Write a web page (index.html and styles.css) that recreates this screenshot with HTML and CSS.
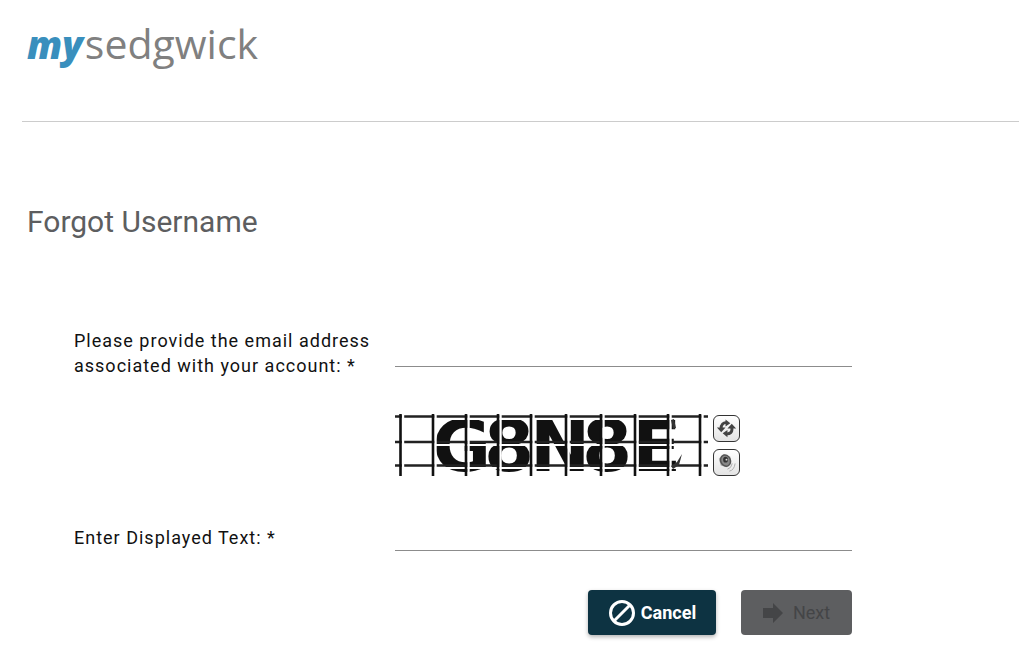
FILE: index.html
```html
<!DOCTYPE html>
<html lang="en">

<head>
    <meta charset="UTF-8">
    <meta name="viewport" content="width=device-width, initial-scale=1.0">
    <title>Forgot Username</title>
    <link rel="stylesheet" href="styles.css">
</head>

<body>
    <header class="header">
        <a class="logo" href="#"><span class="logo-my">my</span><span class="logo-name">sedgwick</span></a>
    </header>

    <main class="content">
        <h1>Forgot Username</h1>

        <form id="form" class="form" action="#">
            <div class="form-row">
                <label for="email">Please provide the email address associated with your account: *</label>
                <input id="email" class="in" type="email">
            </div>

            <div class="captcha">
                <svg class="captcha-image" viewBox="0 0 313 62" role="img" aria-label="Captcha">
                    <text class="captcha-text" y="57" x="37 89 135 187 237">G8N8E</text>
                    <!-- light gaps beside the grid lines -->
                    <path stroke="#fff" stroke-width="2" d="M0 5H313M0 31H313M0 54H313" />
                    <path stroke="#222" stroke-width="2.6" d="M0 2.5H313M0 28H313M0 51.5H313" />
                    <path stroke="#fff" stroke-width="2.4" d="M8 0V62M40.500 0V62M73.500 0V62M105.500 0V62M138.500 0V62M173.500 0V62M208.500 0V62M242.500 0V62M275.500 0V62M307.500 0V62" />
                    <path stroke="#111" stroke-width="2.6" d="M5.500 0V62M38 0V62M71 0V62M103 0V62M136 0V62M171 0V62M206 0V62M240 0V62M273 0V62M305 0V62" />
                    <path fill="#333" d="M276 6l3-1 2 9-3 1zM276 52l6-4 5-8-3 11-6 4z" />
                </svg>
                <div class="captcha-tools">
                    <button type="button" class="tool" aria-label="New image">
                        <svg viewBox="0 0 24 24" fill="none">
                            <path stroke="#444" stroke-width="3" d="M6.500 12C6 8 9 5.500 12 6M17.500 11c1 5-2 7-6 6.500" />
                            <path fill="#444" d="M2 11h9l-4.500 5zM13 12h9l-4.500-5zM11 2.500l5 4-5 3.500zM13 13.500v7.500l-5-4z" />
                        </svg>
                    </button>
                    <button type="button" class="tool" aria-label="Play sound">
                        <svg viewBox="0 0 24 24" fill="none">
                            <path fill="#aaa" d="M4 8l5-5 7 3 1 7-5 4-6-2z" />
                            <ellipse cx="11" cy="10" rx="5" ry="6" fill="#888" stroke="#555" stroke-width="1.5" transform="rotate(-25 11 10)" />
                            <ellipse cx="11" cy="9" rx="2.500" ry="3" fill="#333" />
                            <circle cx="12" cy="9" r="1" fill="#ddd" />
                            <path stroke="#aaa" d="M13 19q4-1 5-6M15 21q5-1 6-8" />
                        </svg>
                    </button>
                </div>
            </div>

            <div class="form-row">
                <label for="captcha-text">Enter Displayed Text: *</label>
                <input id="captcha-text" class="in" type="text">
            </div>

            <div class="buttons">
                <button type="button" class="btn btn-cancel">
                    <svg width="28" height="28" viewBox="0 0 28 28" fill="none" stroke="#fff" stroke-width="3">
                        <circle cx="14" cy="14" r="11.500" />
                        <path d="M6 22L22 6" />
                    </svg>
                    Cancel
                </button>
                <button type="submit" class="btn btn-next" disabled>
                    <svg width="20" height="20" viewBox="0 0 20 20" fill="#444547">
                        <path d="M0 5h10V0l10 10-10 10v-5H0z" />
                    </svg>
                    Next
                </button>
            </div>
        </form>
    </main>
</body>

</html>
```
FILE: styles.css
```css
* {
    box-sizing: border-box;
}

body {
    margin: 0;
    background-color: #fff;
    color: #111;
    font-family: Roboto, sans-serif;
}

.header {
    margin-left: 22px;
    padding: 13px 5px 47px;
    border-bottom: 1px solid #ccc;
}

.logo {
    display: inline-flex;
    align-items: baseline;
    gap: 2px;
    font-family: "Open Sans", sans-serif;
    font-size: 41px;
    line-height: 60px;
    text-decoration: none;
}

.logo-my {
    color: #398fbd;
    font-weight: 800;
    font-style: italic;
    font-size: 38px;
}

.logo-name {
    color: #808080;
}

h1 {
    margin: 0;
    padding: 80px 27px 0;
    color: #5d5e60;
    font-size: 30px;
    font-weight: 400;
    line-height: 40px;
}

.form {
    max-width: 852px;
    padding: 86px 0 20px 74px;
}

.form-row {
    display: grid;
    grid-template-columns: 321px 1fr;
    align-items: center;
}

.form-row label {
    font-size: 18px;
    line-height: 25px;
    letter-spacing: 1px;
}

.in {
    width: 100%;
    height: 38px;
    margin-bottom: 11px;
    padding: 4px 0;
    border: none;
    border-bottom: 1px solid #8c8c8c;
    background: transparent;
    font: inherit;
    font-size: 18px;
}

.in:focus {
    outline: 0;
    border-bottom-color: #0d3342;
}

.captcha {
    display: flex;
    gap: 5px;
    padding: 36px 0 37px 321px;
}

.captcha-image {
    width: 313px;
    height: 62px;
    overflow: visible;
}

.captcha-text {
    fill: #111;
    font-family: "DejaVu Sans", sans-serif;
    font-size: 72px;
    font-weight: 700;
}

.captcha-tools {
    display: flex;
    flex-direction: column;
    gap: 7px;
    padding-top: 1px;
}

.tool {
    width: 27px;
    height: 27px;
    padding: 1px;
    border: 1px solid #333;
    border-radius: 6px;
    background: linear-gradient(#fff, #e4e4e4);
}

.tool svg {
    display: block;
}

.buttons {
    display: flex;
    justify-content: flex-end;
    gap: 25px;
    padding-top: 28px;
}

.btn {
    display: flex;
    align-items: center;
    justify-content: center;
    height: 45px;
    border: none;
    border-radius: 4px;
    font-family: inherit;
    font-size: 18px;
}

.btn-cancel {
    gap: 5px;
    width: 128px;
    background-color: #0d3342;
    color: #fff;
    font-weight: 700;
    box-shadow: 0 2px 4px rgba(0, 0, 0, 0.3);
}

.btn-next {
    gap: 10px;
    width: 111px;
    background-color: #5d5e60;
    color: #444547;
    font-weight: 400;
}
```
